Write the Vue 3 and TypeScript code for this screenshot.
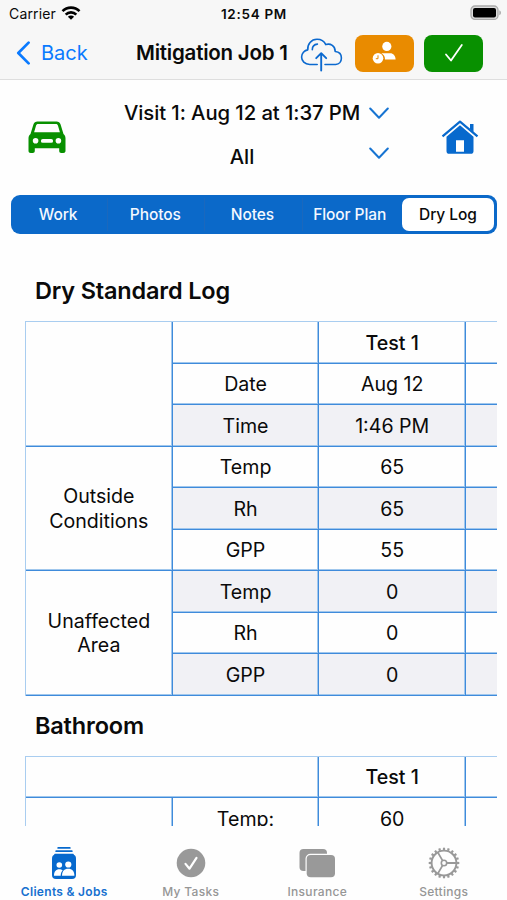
<script setup lang="ts">
interface Row { label: string; value: string; shaded: boolean; heading?: boolean }
interface Group { title: string[]; rows: Row[] }

const segments: string[] = ['Work', 'Photos', 'Notes', 'Floor Plan', 'Dry Log']
const activeSegment = 'Dry Log'

const groups: Group[] = [
  {
    title: [],
    rows: [
      { label: '', value: 'Test 1', shaded: false, heading: true },
      { label: 'Date', value: 'Aug 12', shaded: false },
      { label: 'Time', value: '1:46 PM', shaded: true },
    ],
  },
  {
    title: ['Outside', 'Conditions'],
    rows: [
      { label: 'Temp', value: '65', shaded: false },
      { label: 'Rh', value: '65', shaded: true },
      { label: 'GPP', value: '55', shaded: false },
    ],
  },
  {
    title: ['Unaffected', 'Area'],
    rows: [
      { label: 'Temp', value: '0', shaded: true },
      { label: 'Rh', value: '0', shaded: false },
      { label: 'GPP', value: '0', shaded: true },
    ],
  },
]

const teeth: number[] = Array.from({ length: 20 }, (_, i) => i * 18)
</script>

<template>
  <div class="screen">
    <header class="top">
      <div class="status">
        <div class="carrier">
          <span>Carrier</span>
          <svg width="20" height="14" viewBox="0 0 20 14">
            <g fill="none" stroke="#000" stroke-width="2.6">
              <path d="M1.5 5.2a12 12 0 0 1 17 0" />
              <path d="M4.7 8.6a7.4 7.4 0 0 1 10.6 0" />
            </g>
            <path d="M10 13.8 6.9 10.7a4.4 4.4 0 0 1 6.2 0z" />
          </svg>
        </div>
        <span class="time">12:54 PM</span>
        <svg class="battery" width="32" height="16" viewBox="0 0 32 16">
          <rect x="1" y="1" width="27" height="13.4" rx="4" fill="#ddd" stroke="#aaa" stroke-width="1.3" />
          <rect x="3" y="3" width="23" height="9.4" rx="2" />
          <path d="M29.3 5.3c2.2.8 2.2 4.1 0 4.9z" fill="#aaa" />
        </svg>
      </div>
      <div class="nav">
        <div class="back">
          <svg width="15" height="24" viewBox="0 0 15 24">
            <path d="M12.6 1.6 2.3 12l10.3 10.4" fill="none" stroke="#0a7aff" stroke-width="2.7" stroke-linecap="round" stroke-linejoin="round" />
          </svg>
          <span>Back</span>
        </div>
        <h1>Mitigation Job 1</h1>
        <svg class="cloud" width="44" height="36" viewBox="0 0 44 36">
          <g fill="none" stroke="#0b69cf" stroke-width="1.6" stroke-linecap="round" stroke-linejoin="round">
            <path d="M17.2 27.5H9.8C4.6 27.3 1.6 24 1.6 20.1c0-3.8 2.8-6.7 6.2-7.2C7.2 7.1 11.3 2.3 17 2.3c4 0 7.3 2.1 8.8 5.3 4.7-1.6 9.5 1.6 9.4 6.9 4.1.3 6.2 2.9 6.2 6.5 0 3.7-2.300 6.400-5.700 6.500H25" />
            <path d="M12.300 12.700c0-3.100 2.100-5.300 5.100-5.600" />
            <path d="M21.200 33.500V16.200M16.200 21.200l5-5 5 5" stroke-width="1.900" />
          </g>
        </svg>
        <div class="pill orange">
          <svg width="25" height="24" viewBox="0 0 25 24" fill="#fff">
            <circle cx="14.800" cy="5.400" r="4.600" />
            <path d="M10.200 12.200h8c3 0 5.400 2.500 5.400 6.400H13a7 7 0 0 0-3.600-6.300z" />
            <circle cx="6" cy="17.300" r="5.300" />
            <path d="M6 14.300v3.400H3.800" fill="none" stroke="#e98b00" stroke-width="1" />
          </svg>
        </div>
        <div class="pill green">
          <svg width="20" height="20" viewBox="0 0 20 20">
            <path d="m2 11.500 5 6L17.800 2" fill="none" stroke="#fff" stroke-width="1.800" stroke-linecap="round" stroke-linejoin="round" />
          </svg>
        </div>
      </div>
    </header>

    <section class="visit">
      <svg class="car" width="38" height="33" viewBox="0 0 38 33">
        <path fill="#089000" fill-rule="evenodd" d="M9.500.5h19c2 0 3.500 1 4.100 3L35.500 13c1.500 1.200 2 2.600 2 4.500v12.300c0 1.500-.8 2.200-2.200 2.200h-2c-1.400 0-2.100-.8-2.100-2.200v-2.600H6.800v2.600C6.800 31.200 6 32 4.700 32h-2C1.300 32 .5 31.200.5 29.800V17.500c0-1.900.5-3.300 2-4.500L5.400 3.500c.6-2 2.100-3 4.100-3zM10.200 3.100c-1.200 0-1.900.5-2.200 1.600L6.100 11.300h25.800L30 4.700c-.3-1.100-1-1.600-2.200-1.600zM7.600 17a2.800 2.800 0 1 0 0 5.600 2.800 2.800 0 0 0 0-5.600zM30.400 17a2.800 2.800 0 1 0 0 5.600 2.800 2.800 0 0 0 0-5.600zM14.800 18a1.900 1.900 0 0 0 0 3.800h8.400a1.900 1.900 0 0 0 0-3.800z" />
      </svg>
      <div class="pickers">
        <div class="picker first">
          <span>Visit 1: Aug 12 at 1:37 PM</span>
          <svg width="20" height="13" viewBox="0 0 20 13"><path d="m1.200 1.500 8.800 9.300 8.800-9.300" /></svg>
        </div>
        <div class="picker second">
          <span>All</span>
          <svg width="20" height="13" viewBox="0 0 20 13"><path d="m1.200 1.500 8.800 9.300 8.800-9.300" /></svg>
        </div>
      </div>
      <svg class="house" width="38" height="35" viewBox="0 0 38 35">
        <path d="M1.500 16.300 19 1.600l17.500 14.700" fill="none" stroke="#0769cd" stroke-width="2.200" stroke-linejoin="round" />
        <path d="M29 4h3.500v8L29 9z" fill="#0769cd" />
        <path fill="#0769cd" fill-rule="evenodd" d="M19 5.300 32.500 16.700V31c0 1.900-.8 2.800-2.600 2.800H8.100c-1.800 0-2.600-.9-2.600-2.800V16.700zM15 20.200v11.600h8V20.200z" />
      </svg>
    </section>

    <nav class="segments">
      <div v-for="s in segments" :key="s" class="segment" :class="{ active: s === activeSegment }">{{ s }}</div>
    </nav>

    <main class="log">
      <h2>Dry Standard Log</h2>
      <div class="grid">
        <template v-for="(g, gi) in groups" :key="gi">
          <div class="cell group-title">
            <span v-for="line in g.title" :key="line">{{ line }}</span>
          </div>
          <template v-for="(r, ri) in g.rows" :key="ri">
            <div class="cell" :class="{ shaded: r.shaded }">{{ r.label }}</div>
            <div class="cell" :class="{ shaded: r.shaded, heading: r.heading }">{{ r.value }}</div>
            <div class="cell last" :class="{ shaded: r.shaded }"></div>
          </template>
        </template>
      </div>
      <h2 class="room">Bathroom</h2>
      <div class="grid">
        <div class="cell wide"></div>
        <div class="cell heading">Test 1</div>
        <div class="cell last"></div>
        <div class="cell"></div>
        <div class="cell">Temp:</div>
        <div class="cell">60</div>
        <div class="cell last"></div>
      </div>
    </main>

    <footer class="tabs">
      <div class="tab selected">
        <svg width="26" height="34" viewBox="0 0 26 34">
          <path d="M7.200 1.900h11.600M5.200 5.200h15.600" stroke="#0769cd" stroke-width="1.800" stroke-linecap="round" />
          <rect x="1" y="8.500" width="24" height="24.500" rx="4" fill="#0769cd" />
          <path d="M4 8.600h18" stroke="#0769cd" stroke-width="1.600" stroke-linecap="round" />
          <g fill="#fff">
            <circle cx="8.300" cy="19" r="2.800" />
            <path d="M3 29.800c0-4.300 2-6.600 5.200-6.600 1.600 0 2.700.5 3.500 1.300-1.400 1.300-2 3-2 5.300z" />
            <circle cx="17.300" cy="18.500" r="3.100" />
            <path d="M11 29.800c0-4.500 2.300-7 6.200-7s6.200 2.500 6.200 7z" />
          </g>
        </svg>
        <span>Clients &amp; Jobs</span>
      </div>
      <div class="tab">
        <svg width="30" height="34" viewBox="0 0 30 34">
          <circle cx="15" cy="17" r="14.300" fill="#999" />
          <path d="m9.500 17.900 4 4.800 7-10.800" fill="none" stroke="#fff" stroke-width="2.200" stroke-linecap="round" stroke-linejoin="round" />
        </svg>
        <span>My Tasks</span>
      </div>
      <div class="tab">
        <svg width="38" height="34" viewBox="0 0 38 34">
          <rect x="1.500" y="3" width="27.500" height="22" rx="4" fill="#999" />
          <rect x="7.500" y="7.800" width="31" height="24.500" rx="5" fill="#fefefe" />
          <rect x="8.700" y="9" width="28.300" height="22.300" rx="4" fill="#999" />
        </svg>
        <span>Insurance</span>
      </div>
      <div class="tab">
        <svg width="32" height="34" viewBox="0 0 32 34">
          <g transform="translate(16 17)" fill="none" stroke="#999">
            <circle r="12.400" stroke-width="1.900" />
            <circle r="2.700" stroke-width="1.600" />
            <path d="M2.700 0h9.500M-1.400-2.400l-4.800-8.200M-1.400 2.400l-4.800 8.200" stroke-width="1.800" />
            <path v-for="a in teeth" :key="a" d="M0-15.300v2.500" :transform="`rotate(${a})`" stroke-width="2.200" />
          </g>
        </svg>
        <span>Settings</span>
      </div>
    </footer>
  </div>
</template>

<style>
body { margin: 0; background: #fefefe; }
</style>

<style scoped>
.screen {
  width: 507px;
  height: 900px;
  overflow: hidden;
  display: flex;
  flex-direction: column;
  background: #fefefe;
  color: #0a0a0a;
  font-family: Inter, "Liberation Sans", sans-serif;
}
svg { display: block; flex: none; }
h1, h2 { margin: 0; font-weight: 600; white-space: nowrap; }
.top { height: 79px; flex: none; background: #f7f7f7; border-bottom: 1px solid #dedede; }
.status { height: 27px; display: grid; grid-template-columns: 1fr auto 1fr; align-items: center; padding: 0 5px 0 9px; font-size: 14px; }
.carrier { display: flex; gap: 5px; align-items: center; letter-spacing: 0.150px; }
.carrier svg { margin-top: -2px; }
.time { font-size: 13.500px; font-weight: 600; letter-spacing: 0.700px; margin-right: 3px; }
.battery { justify-self: end; margin-top: -1px; }
.nav { height: 52px; display: flex; align-items: center; padding-left: 16px; }
.back { display: flex; align-items: center; gap: 10px; width: 120px; color: #0a7aff; font-size: 20px; }
.back span { margin-top: -1px; }
h1 { width: 164px; margin-top: -2px; font-size: 20.500px; letter-spacing: -0.220px; }
.cloud { margin-top: 4px; }
.pill { width: 59px; height: 37px; border-radius: 8px; display: grid; place-items: center; }
.orange { margin-left: 11px; background: #e98b00; }
.green { margin-left: 10px; background: #089000; }
.visit { height: 115px; flex: none; display: flex; padding: 0 28px 0 28px; }
.car { margin-top: 41px; }
.pickers { flex: 1; padding: 19px 0 0 58px; font-size: 20.300px; font-weight: 500; letter-spacing: -0.080px; white-space: nowrap; }
.picker { display: flex; align-items: center; height: 28px; }
.picker path { fill: none; stroke: #1774d2; stroke-width: 2; stroke-linecap: round; stroke-linejoin: round; }
.picker span { width: 236px; margin: -1px 9px 0 0; text-align: center; }
.second { margin-top: 16px; }
.second svg { margin-top: -7px; }
.house { margin-top: 40px; }
.segments { height: 39px; flex: none; box-sizing: border-box; margin: 0 10px 0 11px; padding: 3px 0; display: grid; grid-template-columns: repeat(5, 1fr); background: #0b69c9; border-radius: 9px; }
.segment { display: grid; place-items: center; padding-right: 2px; color: #f4f8ff; font-size: 15.500px; font-weight: 500; letter-spacing: -0.080px; border-right: 1px solid #1b68bd; white-space: nowrap; }
.segment:nth-child(4) { border-right-color: transparent; }
.active { border: 0; padding: 0; margin: 0 3px 0 2px; background: #fff; border-radius: 7px; color: #0a0a0a; }
.log { height: 592px; flex: none; overflow: hidden; margin: 0 10px 0 25px; }
h2 { padding: 39px 0 0 10px; height: 48px; line-height: 36px; font-size: 23.500px; letter-spacing: -0.180px; }
.room { padding-top: 12px; height: 48px; }
.grid { display: grid; grid-template-columns: 146.700px 146.700px 146.700px 31px; grid-auto-rows: 41.500px; border-top: 1px solid #a9cdf0; border-left: 1px solid #a9cdf0; }
.cell { box-sizing: border-box; display: flex; align-items: center; justify-content: center; padding-top: 1px; border-right: 1px solid #3f8bdb; border-bottom: 1px solid #3f8bdb; box-shadow: inset -1px -1px #a0c7ed; font-size: 19.600px; line-height: 24.500px; }
.group-title { grid-row: span 3; flex-direction: column; }
.last { border-right: 0; box-shadow: inset 0 -1px #a0c7ed; }
.shaded { background: #f1f1f5; }
.heading { font-weight: 500; }
.wide { grid-column: span 2; }
.tabs { flex: 1; display: grid; grid-template-columns: repeat(4, 126.500px); padding: 20px 0 0 1px; }
.tab { display: flex; flex-direction: column; align-items: center; gap: 4px; color: #969696; font-size: 12px; font-weight: 500; letter-spacing: 0.300px; line-height: 16px; }
.selected { color: #1670cf; font-weight: 600; }
</style>
